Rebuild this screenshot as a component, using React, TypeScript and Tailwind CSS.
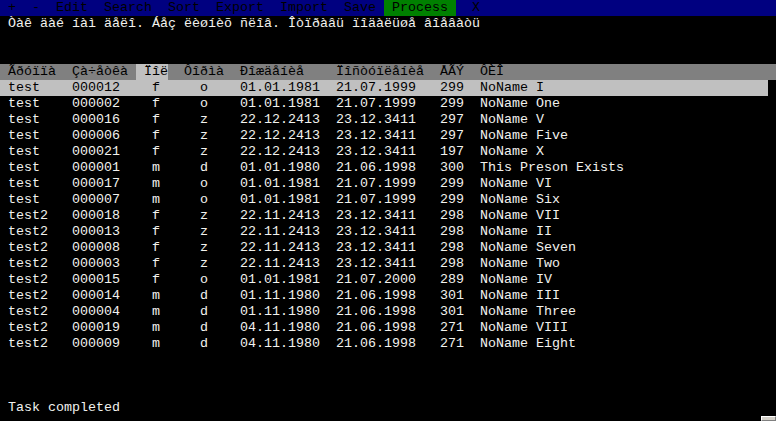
import React from "react";

type Row = [string, string, string, string, string, string, string, string];

const rows: Row[] = [
  ["test", "000012", "f", "o", "01.01.1981", "21.07.1999", "299", "NoName I"],
  ["test", "000002", "f", "o", "01.01.1981", "21.07.1999", "299", "NoName One"],
  ["test", "000016", "f", "z", "22.12.2413", "23.12.3411", "297", "NoName V"],
  ["test", "000006", "f", "z", "22.12.2413", "23.12.3411", "297", "NoName Five"],
  ["test", "000021", "f", "z", "22.12.2413", "23.12.3411", "197", "NoName X"],
  ["test", "000001", "m", "d", "01.01.1980", "21.06.1998", "300", "This Preson Exists"],
  ["test", "000017", "m", "o", "01.01.1981", "21.07.1999", "299", "NoName VI"],
  ["test", "000007", "m", "o", "01.01.1981", "21.07.1999", "299", "NoName Six"],
  ["test2", "000018", "f", "z", "22.11.2413", "23.12.3411", "298", "NoName VII"],
  ["test2", "000013", "f", "z", "22.11.2413", "23.12.3411", "298", "NoName II"],
  ["test2", "000008", "f", "z", "22.11.2413", "23.12.3411", "298", "NoName Seven"],
  ["test2", "000003", "f", "z", "22.11.2413", "23.12.3411", "298", "NoName Two"],
  ["test2", "000015", "f", "o", "01.01.1981", "21.07.2000", "289", "NoName IV"],
  ["test2", "000014", "m", "d", "01.11.1980", "21.06.1998", "301", "NoName III"],
  ["test2", "000004", "m", "d", "01.11.1980", "21.06.1998", "301", "NoName Three"],
  ["test2", "000019", "m", "d", "04.11.1980", "21.06.1998", "271", "NoName VIII"],
  ["test2", "000009", "m", "d", "04.11.1980", "21.06.1998", "271", "NoName Eight"],
];

function DataRow({ row, selected }: { row: Row; selected?: boolean }) {
  return (
    <div
      className={
        selected
          ? "flex h-4 w-[768px] pl-2 bg-[#c0c0c0] text-black"
          : "flex h-4 w-[768px] pl-2 text-[#f2f2ee]"
      }
    >
      <span className="w-[64px]">{row[0]}</span>
      <span className="w-[80px]">{row[1]}</span>
      <span className="w-[48px]">{row[2]}</span>
      <span className="w-[40px]">{row[3]}</span>
      <span className="w-[96px]">{row[4]}</span>
      <span className="w-[104px]">{row[5]}</span>
      <span className="w-[40px]">{row[6]}</span>
      <span>{row[7]}</span>
    </div>
  );
}

export default function App() {
  return (
    <div className="h-[421px] w-[776px] overflow-hidden bg-black font-['Liberation_Mono',monospace] text-[13.33px] leading-4 whitespace-pre text-[#f2f2ee]">
      {/* menu bar */}
      <div className="flex h-4 bg-[#000080] text-black">
        <span>{" +  -  Edit  Search  Sort  Export  Import  Save "}</span>
        <span className="bg-[#008000]">{" Process "}</span>
        <span>{"  X"}</span>
      </div>

      <div className="h-4 pl-2">
        Òàê äàé íàì äåëî. Áåç ëèøíèõ ñëîâ. Îòïðàâü ïîäàëüøå âîåâàòü
      </div>
      <div className="h-8" />

      {/* column headers */}
      <div className="flex h-4 bg-[#808080] pl-2 text-black">
        <span className="w-[64px]">Ãðóïïà</span>
        <span className="w-[64px]">Çà÷åòêà</span>
        <span className="w-[32px] bg-[#c0c0c0] pl-2">Ïîë</span>
        <span className="w-[16px]" />
        <span className="w-[56px]">Ôîðìà</span>
        <span className="w-[96px]">Ðîæäåíèå</span>
        <span className="w-[104px]">Ïîñòóïëåíèå</span>
        <span className="w-[40px]">ÅÃÝ</span>
        <span>ÔÈÎ</span>
      </div>

      {rows.map((r, i) => (
        <DataRow key={r[1]} row={r} selected={i === 0} />
      ))}

      <div className="h-12" />
      <div className="h-4 pl-2">Task completed</div>
      <div className="flex h-[5px] justify-end">
        <div className="h-[5px] w-[15px] border border-[#808080] border-l-white border-t-white bg-[#d4d0c8]" />
      </div>
    </div>
  );
}
